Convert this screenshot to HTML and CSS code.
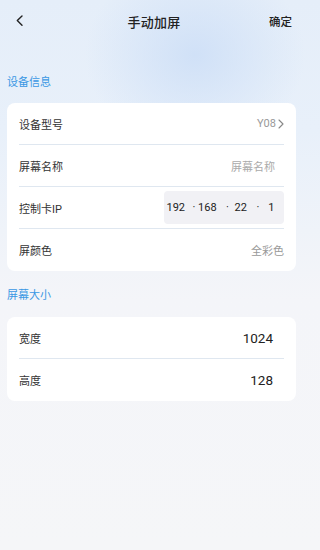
FILE: index.html
```html
<!DOCTYPE html>
<html lang="zh-CN">
<head>
<meta charset="utf-8">
<title>手动加屏</title>
<link rel="stylesheet" href="styles.css">
</head>
<body>
<div class="page">
  <header class="topbar">
    <span class="back">
      <svg width="8" height="12" viewBox="0 0 8 12"><path d="M6 1 L1.3 5.6 L6 10.2" fill="none" stroke="#222" stroke-width="1.4" stroke-linecap="round" stroke-linejoin="round"/></svg>
    </span>
    <h1 class="title">手动加屏</h1>
    <span class="confirm">确定</span>
  </header>

  <div class="section-title first">设备信息</div>
  <div class="card">
    <div class="row">
      <span class="label">设备型号</span>
      <span class="value muted with-arrow">Y08<svg width="6" height="10" viewBox="0 0 6 10"><path d="M1 1 L5 5 L1 9" fill="none" stroke="#888" stroke-width="1.1" stroke-linecap="round" stroke-linejoin="round"/></svg></span>
    </div>
    <div class="row">
      <span class="label">屏幕名称</span>
      <span class="value placeholder">屏幕名称</span>
    </div>
    <div class="row">
      <span class="label">控制卡IP</span>
      <span class="ipbox"><span class="seg">192</span><span class="dot dot1">·</span><span class="seg seg2">168</span><span class="dot dot2">·</span><span class="seg seg3">22</span><span class="dot dot3">·</span><span class="seg seg4">1</span></span>
    </div>
    <div class="row">
      <span class="label">屏颜色</span>
      <span class="value muted">全彩色</span>
    </div>
  </div>

  <div class="section-title second">屏幕大小</div>
  <div class="card">
    <div class="row">
      <span class="label">宽度</span>
      <span class="value num">1024</span>
    </div>
    <div class="row">
      <span class="label">高度</span>
      <span class="value num">128</span>
    </div>
  </div>
</div>
</body>
</html>
```

FILE: styles.css
```css
* { box-sizing: border-box; }
html, body { margin: 0; padding: 0; }
body {
  width: 309px;
  height: 550px;
  overflow: hidden;
  font-family: Roboto, "Noto Sans CJK SC", sans-serif;
  color: #333;
  background:
    radial-gradient(ellipse 110px 95px at 195px 55px, rgba(207, 224, 247, 0.95), rgba(207, 224, 247, 0) 100%),
    linear-gradient(180deg, #e5eef9 0px, #e8f0fa 130px, #eff3f9 230px, #f4f5f9 300px, #f5f6f8 100%);
}
.page { width: 309px; height: 550px; }

.topbar {
  height: 42px;
  display: grid;
  grid-template-columns: 1fr auto 1fr;
  align-items: center;
  padding: 0 17px 0 16px;
}
.back { display: flex; align-items: center; }
.title {
  margin: 0;
  font-size: 13px;
  font-weight: 500;
  color: #222;
  letter-spacing: 0.2px;
}
.confirm {
  justify-self: end;
  font-size: 11.5px;
  color: #222;
  font-weight: 500;
}

.section-title {
  height: 16px;
  line-height: 16px;
  margin-left: 7px;
  font-size: 11px;
  color: #3a98e4;
}
.section-title.first { margin-top: 33px; margin-bottom: 12px; }
.section-title.second { margin-top: 17px; margin-bottom: 13px; }

.card {
  margin: 0 13px 0 7px;
  background: #fff;
  border-radius: 8px;
  padding: 0 12px;
}
.row {
  height: 42px;
  display: flex;
  align-items: center;
  justify-content: space-between;
  border-bottom: 1px solid #dfe7f0;
}
.row:last-child { border-bottom: none; }
.label {
  font-size: 11px;
  color: #333;
}
.value { font-size: 11px; }
.muted { color: #999; }
.placeholder { color: #aaa; padding-right: 9px; }
.with-arrow { display: flex; align-items: center; gap: 2px; }
.num {
  font-size: 13.5px;
  color: #222;
  padding-right: 11px;
}
.ipbox {
  width: 120px;
  height: 33px;
  background: #f1f1f5;
  border-radius: 4px;
  display: flex;
  align-items: center;
  padding-left: 2.5px;
  font-size: 11px;
  color: #222;
}
.dot1 { margin-left: 7.5px; }
.seg2 { margin-left: 2.6px; }
.dot2 { margin-left: 9.5px; }
.seg3 { margin-left: 5.6px; }
.dot3 { margin-left: 9.5px; }
.seg4 { margin-left: 9px; }
```
